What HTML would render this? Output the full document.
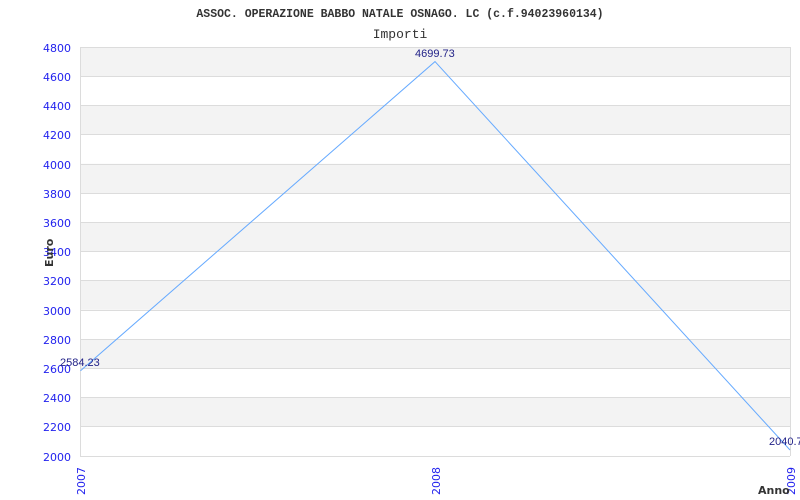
<!DOCTYPE html>
<html><head><meta charset="utf-8"><style>
html,body{margin:0;padding:0;background:#fff;width:800px;height:500px;overflow:hidden}
svg{display:block}
</style></head><body>
<svg width="800" height="500" xmlns="http://www.w3.org/2000/svg">
<rect width="800" height="500" fill="#fff"/>
<g fill="#f3f3f3">
<rect x="80" y="47" width="710" height="29.2"/>
<rect x="80" y="105.4" width="710" height="29.2"/>
<rect x="80" y="163.8" width="710" height="29.2"/>
<rect x="80" y="222.2" width="710" height="29.2"/>
<rect x="80" y="280.6" width="710" height="29.2"/>
<rect x="80" y="339" width="710" height="29.2"/>
<rect x="80" y="397.4" width="710" height="29.2"/>
</g>
<g stroke="#dcdcdc" stroke-width="1">
<line x1="80" y1="47.5" x2="790" y2="47.5"/>
<line x1="80" y1="76.5" x2="790" y2="76.5"/>
<line x1="80" y1="105.5" x2="790" y2="105.5"/>
<line x1="80" y1="134.5" x2="790" y2="134.5"/>
<line x1="80" y1="164.5" x2="790" y2="164.5"/>
<line x1="80" y1="193.5" x2="790" y2="193.5"/>
<line x1="80" y1="222.5" x2="790" y2="222.5"/>
<line x1="80" y1="251.5" x2="790" y2="251.5"/>
<line x1="80" y1="280.5" x2="790" y2="280.5"/>
<line x1="80" y1="310.5" x2="790" y2="310.5"/>
<line x1="80" y1="339.5" x2="790" y2="339.5"/>
<line x1="80" y1="368.5" x2="790" y2="368.5"/>
<line x1="80" y1="397.5" x2="790" y2="397.5"/>
<line x1="80" y1="426.5" x2="790" y2="426.5"/>
<line x1="80" y1="456.5" x2="790" y2="456.5"/>
<line x1="80.5" y1="47" x2="80.5" y2="456"/>
<line x1="790.5" y1="47" x2="790.5" y2="456"/>
</g>
<polyline points="80.5,370.7 435,61.6 790,450" fill="none" stroke="#66aaff" stroke-width="1"/>
<text x="400" y="17" text-anchor="middle" font-family="Liberation Mono, monospace" font-weight="bold" font-size="11.5" fill="#333">ASSOC. OPERAZIONE BABBO NATALE OSNAGO. LC (c.f.94023960134)</text>
<text x="400" y="38" text-anchor="middle" font-family="Liberation Mono, monospace" font-size="13" fill="#333">Importi</text>
<g font-family="DejaVu Sans, sans-serif" font-size="11" fill="#2222ee" text-anchor="end">
<text x="71" y="52">4800</text>
<text x="71" y="81">4600</text>
<text x="71" y="110">4400</text>
<text x="71" y="139">4200</text>
<text x="71" y="169">4000</text>
<text x="71" y="198">3800</text>
<text x="71" y="227">3600</text>
<text x="71" y="256">3400</text>
<text x="71" y="285">3200</text>
<text x="71" y="315">3000</text>
<text x="71" y="344">2800</text>
<text x="71" y="373">2600</text>
<text x="71" y="402">2400</text>
<text x="71" y="431">2200</text>
<text x="71" y="461">2000</text>
</g>
<g font-family="DejaVu Sans, sans-serif" font-size="11" fill="#2222ee">
<text transform="translate(85,495) rotate(-90)">2007</text>
<text transform="translate(440,495) rotate(-90)">2008</text>
<text transform="translate(795,495) rotate(-90)">2009</text>
</g>
<g font-family="Liberation Sans, sans-serif" font-size="11" fill="#222288">
<text x="60" y="366">2584.23</text>
<text x="415" y="57">4699.73</text>
<text x="769" y="445">2040.75</text>
</g>
<text transform="translate(53,267) rotate(-90)" font-family="DejaVu Sans, sans-serif" font-weight="bold" font-size="11" fill="#333">Euro</text>
<text x="758" y="494" font-family="DejaVu Sans, sans-serif" font-weight="bold" font-size="11" fill="#333">Anno</text>
</svg>
</body></html>
